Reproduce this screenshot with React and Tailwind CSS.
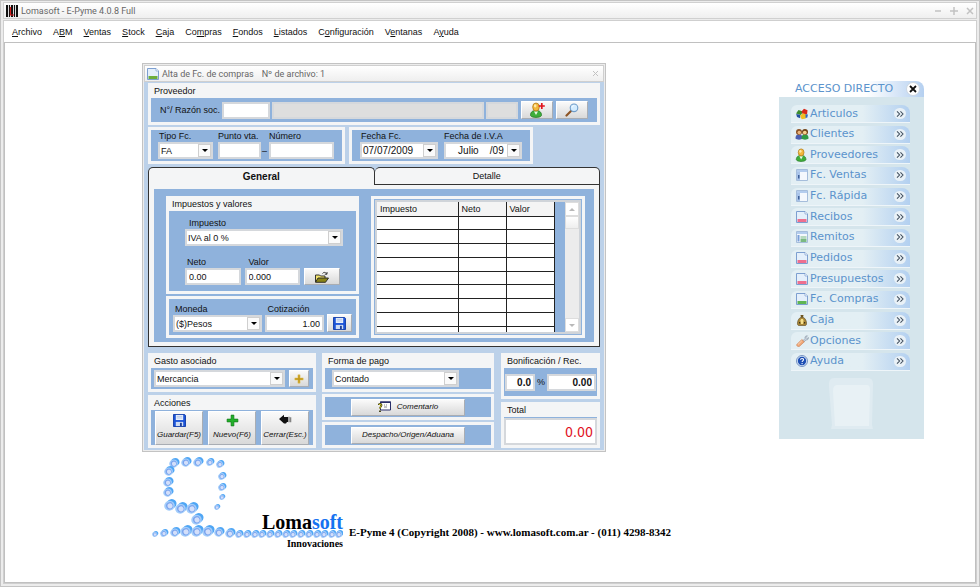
import clsx from 'clsx';

const menu = [
  ['', 'A', 'rchivo'],
  ['A', 'B', 'M'],
  ['', 'V', 'entas'],
  ['', 'S', 'tock'],
  ['', 'C', 'aja'],
  ['Co', 'm', 'pras'],
  ['', 'F', 'ondos'],
  ['', 'L', 'istados'],
  ['C', 'o', 'nfiguración'],
  ['V', 'e', 'ntanas'],
  ['A', 'y', 'uda'],
];

const shortcuts = [
  { label: 'Articulos', icon: 'blocks' },
  { label: 'Clientes', icon: 'people' },
  { label: 'Proveedores', icon: 'person' },
  { label: 'Fc. Ventas', icon: 'form' },
  { label: 'Fc. Rápida', icon: 'form' },
  { label: 'Recibos', icon: 'docRed' },
  { label: 'Remitos', icon: 'formGreen' },
  { label: 'Pedidos', icon: 'docRed' },
  { label: 'Presupuestos', icon: 'docRed' },
  { label: 'Fc. Compras', icon: 'docGreen' },
  { label: 'Caja', icon: 'bag' },
  { label: 'Opciones', icon: 'wrench' },
  { label: 'Ayuda', icon: 'help' },
];

// x, y, radius of every bead in the logo
const beads = [
  [25, 7, 5], [37, 6, 5], [49, 6, 5], [61, 6, 4], [71, 8, 4], [73, 20, 4], [73, 31, 4], [73, 41, 3], [68, 51, 3],
  [20, 15, 5], [19, 26, 5], [19, 36, 5], [21, 49, 6], [32, 52, 6], [43, 52, 6], [48, 63, 6],
  [6, 78, 3], [15, 77, 4], [26, 76, 5], [37, 75, 6], [48, 75, 6], [59, 75, 6], [70, 76, 5], [81, 77, 5],
  [90, 78, 4], [98, 78, 4], [106, 78, 4], [113, 78, 4], [121, 78, 4], [129, 78, 4], [137, 78, 4],
  [144, 78, 4], [152, 78, 4], [160, 78, 4], [168, 78, 4], [175, 78, 4], [183, 78, 4], [190, 78, 4],
];

const DocIcon = ({ color, className }) => (
  <svg viewBox="0 0 12 12" className={className} aria-hidden="true">
    <path d="M.5.5h8.500l2.500 2.500v8.500h-11z" fill="#e4effb" stroke="#7d9fd0" />
    <path d="M9 .5V3h2.500" fill="#fff" stroke="#7d9fd0" strokeWidth=".7" />
    <path d="M1.500 8h9v3h-9z" fill={color} />
  </svg>
);

const FormIcon = ({ green }) => (
  <svg viewBox="0 0 12 12" className="size-3" aria-hidden="true">
    <path d="M.5.5h11v11H.5z" fill="#f4f8fd" stroke="#a5bddb" />
    <path d="M1 1h10v2H1z" fill="#b4cdee" />
    {green ? (
      <>
        <path d="M1.500 4h2v6.500h-2z" fill="#7aa0d8" />
        <path d="M4.500 5.500h6v1h-6zM4.500 7.500h6v3.500h-6z" fill="#79b982" />
      </>
    ) : (
      <>
        <path d="M1 3h3v8H1z" fill="#a9c4ea" />
        <path d="M2 6h1.500v3.500H2z" fill="#3d5f97" />
      </>
    )}
  </svg>
);

const Person = ({ className, plus }) => (
  <svg viewBox="0 0 16 16" className={className} aria-hidden="true">
    <path d="M1.500 13.500c0-4 2.500-5 5.500-5s5.500 1 5.500 5c-1 2.500-10 2.500-11 0z" fill="#3fae3b" stroke="#237a24" strokeWidth=".8" />
    <path d="M5 9.500h4L7 13z" fill="#eafbe6" />
    <ellipse cx="7" cy="5" rx="3.300" ry="4" fill="#f3b83c" stroke="#b37a17" strokeWidth=".8" />
    <ellipse cx="6.200" cy="3.800" rx="1.300" ry="1.600" fill="#fde9a8" />
    {plus && <path d="M12.800 1v6M9.800 4h6" stroke="#e0141e" strokeWidth="1.700" />}
  </svg>
);

const People = () => (
  <svg viewBox="0 0 14 12" className="h-3 w-3.5" aria-hidden="true">
    <path d="M.5 10.500C.5 7 2 6.500 4 6.500s3.500.5 3.500 4c-1 1.500-6 1.500-7 0z" fill="#4a5fb0" />
    <path d="M6.500 10.500c0-3.500 1.500-4 3.500-4s3.500.5 3.500 4c-1 1.500-6 1.500-7 0z" fill="#2f9a45" />
    <circle cx="4" cy="4" r="3" fill="#8c5226" />
    <circle cx="4.300" cy="4.600" r="1.800" fill="#eab67d" />
    <circle cx="10" cy="4" r="3" fill="#6f4216" />
    <circle cx="9.800" cy="4.600" r="1.900" fill="#f5cf8d" />
  </svg>
);

const Blocks = () => (
  <svg viewBox="0 0 14 12" className="h-3 w-3.5" aria-hidden="true">
    <path d="M1 5.500L3.500 2 8 3.500 6 7z" fill="#3c8d2f" />
    <path d="M6.500 3.500L9 .8l3.500 1.500-.5 4-4 .5z" fill="#d8281b" />
    <path d="M1.200 6l4 .8v3.500L2 9z" fill="#23509f" />
    <path d="M5 7.500l3.500-2.200 3 1.500-.8 3.700-4 .8z" fill="#f0bd22" />
    <path d="M10.500 6.300l2.500.2-.7 3-1.700.5z" fill="#2f67c5" />
  </svg>
);

const Bag = () => (
  <svg viewBox="0 0 12 12" className="size-3" aria-hidden="true">
    <path d="M4.500 1h3L7 3.500H5z" fill="#6d5522" />
    <path d="M4.500 3.500h3C10.500 5 11.500 11 9.500 11.500h-7C.5 11 1.500 5 4.500 3.500z" fill="#a88636" stroke="#5a4720" strokeWidth=".6" />
    <path d="M5 5h2l.5 1.500L7 10H5l-.6-3.500z" fill="#f6df8b" />
    <path d="M3 8h1.200v1.500H3zM8 8h1.200v1.500H8z" fill="#3d3216" />
  </svg>
);

const Wrench = () => (
  <svg viewBox="0 0 13 12" className="h-3 w-[13px]" aria-hidden="true">
    <path d="M6.500 6L9 3.500C8.500 1.500 10 .5 11.500.8L10 2.300l1 1.200 1.500-1c.3 1.500-1 2.800-2.500 2.500L8 7z" fill="#c6d0dc" stroke="#7d8a9b" strokeWidth=".5" />
    <path d="M.8 9.500l5-5 2.500 2.300-4.800 4.500C2 12 .3 11 .8 9.500z" fill="#f0a878" stroke="#c9794b" strokeWidth=".6" />
    <path d="M1.800 9.700l4-3.900" stroke="#fbd9bf" strokeWidth=".9" />
  </svg>
);

const Help = () => (
  <svg viewBox="0 0 12 12" className="size-3" aria-hidden="true">
    <circle cx="6" cy="6" r="5.500" fill="#d7e6f8" stroke="#4b6fae" strokeWidth=".7" />
    <circle cx="6" cy="6" r="4.200" fill="#1d4fb4" />
    <path d="M4.500 4.700C4.600 3 7.600 3 7.500 4.800c0 1-1.400 1.100-1.400 2.100" stroke="#fff" fill="none" strokeWidth="1.100" />
    <circle cx="6.100" cy="8.600" r=".7" fill="#fff" />
  </svg>
);

const Floppy = ({ className }) => (
  <svg viewBox="0 0 14 14" className={className} aria-hidden="true">
    <path d="M.5.5h12l1 1v12H.5z" fill="#1c54d8" stroke="#0f3aa6" />
    <path d="M3 1h8v5.500H3z" fill="#e9f0fb" />
    <path d="M4 2.500h6M4 4.300h6" stroke="#9db4dd" strokeWidth=".7" />
    <path d="M3 8.500h8V13H3z" fill="#cfdcf3" />
    <path d="M7.500 9.500h2V13h-2z" fill="#1c3f96" />
  </svg>
);

const Magnifier = () => (
  <svg viewBox="0 0 14 14" className="size-3.5" aria-hidden="true">
    <path d="M1.500 12.500l5-5" stroke="#8d5424" strokeWidth="2.200" strokeLinecap="round" />
    <circle cx="9" cy="4.800" r="3.800" fill="#d3ecff" stroke="#6f9cc8" strokeWidth="1.100" />
    <path d="M7 4.500c.2-1.300 1.200-1.900 2.300-1.800" stroke="#fff" fill="none" />
  </svg>
);

const Folder = () => (
  <svg viewBox="0 0 14 12" className="h-3 w-3.5" aria-hidden="true">
    <path d="M.5 11V4h4l1 1h4.500v2" fill="#f2e36c" stroke="#222" strokeWidth=".9" />
    <path d="M.5 11.300L3 7h10.500L10.500 11.300z" fill="#8a8417" stroke="#222" strokeWidth=".9" />
    <path d="M7.500 2.500c1-1.500 3-1.500 4 .2M12 1v2.200H9.800" stroke="#222" fill="none" strokeWidth=".9" />
  </svg>
);

const Plus = ({ className, color, edge }) => (
  <svg viewBox="0 0 12 12" className={className} aria-hidden="true">
    <path d="M4.700 1h2.600v3.700H11v2.600H7.300V11H4.700V7.300H1V4.700h3.700z" fill={color} stroke={edge} strokeWidth=".6" />
  </svg>
);

const Hand = () => (
  <svg viewBox="0 0 13 11" className="h-[11px] w-[13px]" aria-hidden="true">
    <path d="M0 5L5 .8V3h4v5H8l-1 1.500H5z" fill="#111" />
    <path d="M9.500 2.800h1v5.500h-1zM11.300 3.200h.9v5h-.9z" fill="#555" />
  </svg>
);

const Note = () => (
  <svg viewBox="0 0 13 12" className="h-3 w-[13px]" aria-hidden="true">
    <path d="M2.500 1h10v8h-10z" fill="#fff" stroke="#2a2f6a" />
    <path d="M2 .5h11V2H2z" fill="#2a2f6a" />
    <path d="M6 4h1M8 4h1M6 6h3" stroke="#888" />
    <path d="M.7 4c0-1.500 2.800-1.500 2.800 0S2 5.500 2 7.500M2 9.500v1.500" stroke="#3a3a10" strokeWidth="1.800" fill="none" />
    <path d="M.9 4c0-1 2.400-1 2.400 0S2 5.500 2 7.500" stroke="#f2e32a" strokeWidth=".9" fill="none" />
  </svg>
);

const shortcutIcons = {
  blocks: <Blocks />,
  people: <People />,
  person: <Person className="size-3.5" />,
  form: <FormIcon />,
  formGreen: <FormIcon green />,
  docRed: <DocIcon color="#ee6f8f" className="size-3" />,
  docGreen: <DocIcon color="#5fb653" className="size-3" />,
  bag: <Bag />,
  wrench: <Wrench />,
  help: <Help />,
};

const Group = ({ title, className, bodyClass, children }) => (
  <section className={clsx('flex flex-col bg-[#f4f5f6] p-[3px]', className)}>
    {title && <h2 className="h-3 pl-[3px] leading-[10px]">{title}</h2>}
    <div className={clsx('flex-1 bg-[#8fb2dc]', bodyClass)}>{children}</div>
  </section>
);

const TextBox = ({ label, className, ...props }) => (
  <input
    aria-label={label}
    className={clsx('block h-[17px] min-w-0 border-2 border-[#d5d8dc] px-0.5 leading-3 outline-none', className)}
    {...props}
  />
);

const Combo = ({ id, label, value, className }) => (
  <div className={clsx('relative h-[17px] border-2 border-[#d5d8dc] bg-white', className)}>
    <select id={id} aria-label={label} className="block h-full w-full appearance-none pl-px leading-3 outline-none">
      <option>{value}</option>
    </select>
    <span className="pointer-events-none absolute inset-y-0 right-0 flex w-[13px] items-center justify-center border border-[#cfcfcf] bg-[#fafafa]">
      <svg viewBox="0 0 6 3" className="h-[3px] w-1.5">
        <path d="M0 0h6L3 3z" fill="#000" />
      </svg>
    </span>
  </div>
);

const Button = ({ className, children, ...props }) => (
  <button
    type="button"
    className={clsx(
      'flex shrink-0 items-center justify-center border border-t-white border-r-[#a9adb3] border-b-[#a9adb3] border-l-white bg-linear-to-b from-[#fafafa] to-[#d9d9d9]',
      className,
    )}
    {...props}
  >
    {children}
  </button>
);

const GeneralTab = () => (
  <div className="flex h-[162px] border-x border-b border-[#333] bg-[#f4f5f6] px-[5px] py-1">
    <div className="flex flex-1 gap-3 bg-[#8fb2dc] pt-[7px] pr-[9px] pl-3">
      <div className="flex w-[193px] shrink-0 flex-col gap-0.5">
        <Group title="Impuestos y valores" className="h-[98px]" bodyClass="px-4 pt-1.5">
          <label htmlFor="impuesto" className="block pl-1 leading-3">Impuesto</label>
          <Combo id="impuesto" value="IVA al 0 %" className="w-[158px]" />
          <div className="mt-2.5 flex items-end gap-1">
            <label className="block w-[58px] leading-3">
              <span className="pl-0.5">Neto</span>
              <TextBox defaultValue="0.00" className="w-full bg-white" />
            </label>
            <label className="block w-[58px] leading-3">
              <span className="pl-1">Valor</span>
              <TextBox defaultValue="0.000" className="w-full bg-white" />
            </label>
            <Button aria-label="Abrir" className="h-[17px] w-9"><Folder /></Button>
          </div>
        </Group>
        <Group className="h-[42px]" bodyClass="flex items-end gap-[3px] px-1 pb-[3px]">
          <div className="w-[90px]">
            <label htmlFor="moneda" className="block pl-0.5 leading-3">Moneda</label>
            <Combo id="moneda" value="($)Pesos" className="w-full" />
          </div>
          <label className="block w-[59px] leading-3">
            <span className="pl-0.5">Cotización</span>
            <TextBox defaultValue="1.00" className="w-full bg-white text-right" />
          </label>
          <Button aria-label="Guardar cotización" className="h-[18px] w-[25px]"><Floppy className="size-[13px]" /></Button>
        </Group>
      </div>
      <div className="flex h-[142px] flex-1 bg-[#f4f5f6] p-[3px]">
        <div className="flex flex-1 border border-[#8fb2dc] bg-[#d0d4d9] p-0.5">
          <div className="flex flex-1 justify-between bg-[#8fb2dc]">
            <table className="h-[130px] w-[178px] table-fixed border-collapse bg-white text-left">
              <thead>
                <tr className="h-[14px] bg-[#f4f4f4]">
                  <th className="w-[81px] border-r border-b border-[#222] py-0 pl-[3px] leading-3 font-normal">Impuesto</th>
                  <th className="w-12 border-r border-b border-[#222] py-0 pl-[3px] leading-3 font-normal">Neto</th>
                  <th className="border-r border-b border-[#222] py-0 pl-[3px] leading-3 font-normal">Valor</th>
                </tr>
              </thead>
              <tbody>
                {[...Array(8).keys()].map(row => (
                  <tr key={row}>
                    <td className="border-r border-b border-[#222] p-0" />
                    <td className="border-r border-b border-[#222] p-0" />
                    <td className="border-r border-b border-[#222] p-0" />
                  </tr>
                ))}
                <tr className="h-1.5">
                  <td className="border-r border-[#222] p-0" />
                  <td className="border-r border-[#222] p-0" />
                  <td className="border-r border-[#222] p-0" />
                </tr>
              </tbody>
            </table>
            <div className="flex w-3.5 flex-col bg-[#ececec] text-[#b9b9b9]">
              <span className="flex h-[14px] items-center justify-center border border-[#ddd] bg-white">
                <svg viewBox="0 0 6 3" className="h-[3px] w-1.5"><path d="M0 3h6L3 0z" fill="currentColor" /></svg>
              </span>
              <span className="h-[13px] border border-[#ddd] bg-linear-to-b from-white to-[#eee]" />
              <span className="mt-auto flex h-[14px] items-center justify-center border border-[#ddd] bg-white">
                <svg viewBox="0 0 6 3" className="h-[3px] w-1.5"><path d="M0 0h6L3 3z" fill="currentColor" /></svg>
              </span>
            </div>
          </div>
        </div>
      </div>
    </div>
  </div>
);

const PurchaseWindow = () => (
  <section className="w-[464px] border border-[#c3c3c3] bg-[#ececec] p-px">
    <header className="flex h-[17px] items-center border border-[#cfcfcf] bg-linear-to-b from-white to-[#efefef] pl-0.5 font-['Roboto',sans-serif] text-[9px] text-[#666]">
      <DocIcon color="#6dae3c" className="mr-[3px] size-3" />
      <h1>Alta de Fc. de compras</h1>
      <span className="ml-2">Nº de archivo: 1</span>
      <button type="button" aria-label="Cerrar" className="mr-1 ml-auto">
        <svg viewBox="0 0 7 7" className="size-[7px]"><path d="M1 1l5 5M6 1L1 6" stroke="#c2c2c2" /></svg>
      </button>
    </header>
    <div className="bg-[#bcd1e9] px-1 pt-px pb-0.5">
      <Group title="Proveedor" className="h-[42px]" bodyClass="flex items-center gap-0.5 pl-[9px]">
        <label htmlFor="proveedor" className="w-[60px] shrink-0 whitespace-nowrap">N°/ Razón soc.</label>
        <TextBox id="proveedor" className="w-12 shrink-0 bg-white" />
        <TextBox label="Razón social" readOnly className="w-[212px] shrink-0 bg-[#dedede]" />
        <TextBox label="Código" readOnly className="w-8 shrink-0 bg-[#dedede]" />
        <Button aria-label="Nuevo proveedor" className="ml-px h-[18px] w-8"><Person plus className="size-4" /></Button>
        <Button aria-label="Buscar proveedor" className="ml-px h-[18px] w-8"><Magnifier /></Button>
      </Group>

      <div className="mt-0.5 flex gap-1">
        <Group className="h-[37px] w-[197px]" bodyClass="flex items-end gap-[5px] pb-0.5 pl-[7px]">
          <div className="w-[55px]">
            <label htmlFor="tipo" className="block pl-px leading-3">Tipo Fc.</label>
            <Combo id="tipo" value="FA" className="w-full" />
          </div>
          <label className="block w-[43px] leading-3 whitespace-nowrap">
            Punto vta.
            <TextBox className="w-full bg-white" />
          </label>
          <div className="-mx-1 flex h-[17px] w-1.5 items-center">–</div>
          <label className="block w-[65px] leading-3">
            Número
            <TextBox className="w-full bg-white" />
          </label>
        </Group>
        <Group className="h-[37px] w-[184px]" bodyClass="flex items-end gap-1.5 pb-0.5 pl-2">
          <div className="w-[78px]">
            <label htmlFor="fecha" className="block pl-px leading-3">Fecha Fc.</label>
            <Combo id="fecha" value="07/07/2009" className="w-full text-[10px]" />
          </div>
          <div className="w-[78px]">
            <label htmlFor="fechaIva" className="block leading-3">Fecha de I.V.A</label>
            <Combo id="fechaIva" value={'\u00a0\u00a0\u00a0\u00a0Julio\u00a0\u00a0\u00a0\u00a0/09'} className="w-full text-[10px]" />
          </div>
        </Group>
      </div>

      <div className="mt-[3px] flex h-[18px]" role="tablist">
        <button type="button" role="tab" aria-selected="true" className="flex-1 rounded-t-[5px] border border-b-0 border-[#333] bg-[#f4f5f6] text-[10px] font-bold">
          General
        </button>
        <button type="button" role="tab" aria-selected="false" className="flex-1 rounded-t-[5px] border border-l-0 border-[#333] bg-[#f4f5f6]">
          Detalle
        </button>
      </div>
      <GeneralTab />

      <div className="mt-1.5 flex items-start">
        <div className="flex w-[168px] shrink-0 flex-col gap-[3px]">
          <Group title="Gasto asociado" className="h-[39px]" bodyClass="flex items-center gap-1 pl-[3px]">
            <Combo label="Gasto asociado" value="Mercancia" className="w-[131px]" />
            <Button aria-label="Agregar gasto" className="h-[17px] w-5"><Plus className="size-2.5" color="#c49a1c" edge="#e2c766" /></Button>
          </Group>
          <Group title="Acciones" className="h-[53px]" bodyClass="flex items-center gap-[5px] pl-1 text-[8px] leading-3 italic">
            <Button className="h-[34px] w-12 flex-col gap-0.5"><Floppy className="size-[13px]" />Guardar(F5)</Button>
            <Button className="h-[34px] w-12 flex-col gap-0.5"><Plus className="size-[13px]" color="#22b02a" edge="#107516" />Nuevo(F6)</Button>
            <Button className="h-[34px] w-12 flex-col gap-1"><Hand />Cerrar(Esc.)</Button>
          </Group>
        </div>
        <div className="ml-1.5 flex w-[172px] shrink-0 flex-col gap-0.5">
          <Group title="Forma de pago" className="h-[39px]" bodyClass="flex items-center pl-[7px]">
            <Combo label="Forma de pago" value="Contado" className="w-[127px]" />
          </Group>
          <Group className="h-[26px]" bodyClass="flex items-center pl-[26px] text-[8px] italic">
            <Button className="h-[17px] w-[114px] gap-1.5"><Note />Comentario</Button>
          </Group>
          <Group className="h-[26px]" bodyClass="flex items-center pl-[26px] text-[8px] italic">
            <Button className="h-[17px] w-[114px]">Despacho/Origen/Aduana</Button>
          </Group>
        </div>
        <div className="ml-[7px] flex min-w-0 flex-1 flex-col gap-[3px]">
          <Group title="Bonificación / Rec." className="h-[46px]" bodyClass="flex items-center gap-0.5 px-px">
            <TextBox label="Bonificación %" defaultValue="0.0" className="w-[30px] shrink-0 bg-white text-right text-[10px] font-bold" />
            %
            <TextBox label="Bonificación" defaultValue="0.00" className="w-0 flex-1 bg-white text-right text-[10px] font-bold" />
          </Group>
          <Group title="Total" className="h-[46px]" bodyClass="pt-px">
            <input
              aria-label="Total"
              readOnly
              defaultValue="0.00"
              className="block h-[27px] w-full border-2 border-[#d5d8dc] bg-white px-0.5 text-right font-['DejaVu_Sans_Condensed','DejaVu_Sans',sans-serif] text-[14px] text-[#e0101c] outline-none"
            />
          </Group>
        </div>
      </div>
    </div>
  </section>
);

const Shortcuts = () => (
  <aside className="mt-[18px] w-[145px] font-['DejaVu_Sans',sans-serif] text-[11px] text-[#5b93cc]">
    <header className="flex h-4 items-center justify-between rounded-tr-lg bg-linear-to-r from-white from-60% to-[#b5d0f0] pl-4">
      <h2>ACCESO DIRECTO</h2>
      <button type="button" aria-label="Cerrar acceso directo" className="mr-1 flex size-3.5 items-center justify-center rounded-full border border-[#ccd6e0] bg-white">
        <svg viewBox="0 0 8 8" className="size-2"><path d="M1 1l6 6M7 1L1 7" stroke="#111" strokeWidth="1.800" /></svg>
      </button>
    </header>
    <div className="bg-[#d5e5ec] pt-2 pr-3.5 pb-2 pl-3">
      <nav className="flex h-[266px] flex-col justify-between">
        {shortcuts.map(item => (
          <a key={item.label} href="#" className="flex h-[18px] items-center rounded-tl-md rounded-tr-lg border-b border-[#eef5f9] bg-linear-to-r from-[#e3eff4] from-60% to-[#b3d0f0] pl-[3px]">
            <span className="flex w-4 justify-center">{shortcutIcons[item.icon]}</span>
            <span className="flex-1 leading-4 whitespace-nowrap">{item.label}</span>
            <span className="mr-1 flex h-[11px] w-3 items-center justify-center rounded-full bg-[#e9f1f7]">
              <svg viewBox="0 0 9 7" className="h-[6px] w-2">
                <path d="M1 .5l3 3-3 3M5 .5l3 3-3 3" stroke="#3f4d5c" strokeWidth="1.200" fill="none" />
              </svg>
            </span>
          </a>
        ))}
      </nav>
      <svg viewBox="0 0 46 54" className="mx-auto mt-1.5 h-[54px] w-[46px]" aria-hidden="true">
        <path d="M6 1h34q5 0 5 6l-1 41 1 4H3l1-4L1 10Q0 1 6 1z" fill="#dfebf1" />
        <path d="M9 8h30q3 0 3 5l-1 36H7L5 14q0-6 4-6z" fill="#e8f1f5" />
      </svg>
    </div>
  </aside>
);

const Logo = () => (
  <div className="relative h-[94px] w-[194px] text-right font-['Liberation_Serif',serif] font-bold text-black">
    <svg viewBox="0 0 194 94" className="absolute inset-0 h-[94px] w-[194px]" aria-hidden="true">
      {beads.map(([x, y, r]) => (
        <g key={`${x}-${y}`} transform={`translate(${x} ${y}) rotate(-20)`}>
          <ellipse cx={r * 0.3} cy={-r * 0.1} rx={r * 0.85} ry={r * 0.78} fill="#4fa6f5" />
          <ellipse cx={-r * 0.12} cy={r * 0.08} rx={r * 0.88} ry={r * 0.82} fill="#a3cdfa" />
          <ellipse cx={-r * 0.1} cy={r * 0.1} rx={r * 0.6} ry={r * 0.6} fill="#7ba4ee" />
          <ellipse cx={-r * 0.05} cy={r * 0.15} rx={r * 0.42} ry={r * 0.42} fill="#d3dffa" />
        </g>
      ))}
    </svg>
    <div className="relative pt-[54px] text-[20px] leading-6">Loma<span className="text-[#1673f0]">soft</span></div>
    <div className="relative mt-1 text-[10px] leading-3">Innovaciones</div>
  </div>
);

export default function App() {
  return (
    <div className="flex min-h-screen flex-col border border-[#c4c4c4] bg-[#ececec] px-0.5 pt-px pb-0.5 font-['Liberation_Sans',sans-serif] text-[9px] leading-3 text-[#111]">
      <header className="flex h-[17px] items-center border border-[#d0d0d0] bg-linear-to-b from-white to-[#efefef] px-0.5 font-['Roboto',sans-serif] text-[9px] text-[#666]">
        <svg viewBox="0 0 12 12" className="mr-[3px] size-3" aria-hidden="true">
          <path d="M0 0h12v12H0z" fill="#ddd" />
          <path d="M0 0h2v12H0zM3 0h1v12H3zM5 0h2v12H5zM8 0h1v12H8zM10 0h2v12h-2z" fill="#111" />
          <path d="M4.500 2v8H8" stroke="#d41a1a" strokeWidth="1.200" fill="none" />
        </svg>
        Lomasoft - E-Pyme 4.0.8 Full
        <div className="ml-auto flex gap-2">
          <button type="button" aria-label="Minimizar"><svg viewBox="0 0 8 8" className="size-2"><path d="M1 4h6" stroke="#c2c2c2" strokeWidth="1.500" /></svg></button>
          <button type="button" aria-label="Maximizar"><svg viewBox="0 0 8 8" className="size-2"><path d="M0 4h8M4 0v8" stroke="#c2c2c2" strokeWidth="1.500" /></svg></button>
          <button type="button" aria-label="Salir"><svg viewBox="0 0 8 8" className="size-2"><path d="M1 1l6 6M7 1L1 7" stroke="#c2c2c2" strokeWidth="1.500" /></svg></button>
        </div>
      </header>
      <div className="mt-px flex flex-1 flex-col border border-[#cfcfcf] bg-white">
        <nav className="flex h-[21px] items-center gap-[11px] pl-2">
          {menu.map(([before, key, after]) => (
            <button type="button" key={before + key + after}>
              {before}<u>{key}</u>{after}
            </button>
          ))}
        </nav>
        <main className="flex-1 border border-[#c0c0c0] pt-5 pb-6">
          <div className="flex items-start justify-between pr-[51px] pl-[137px]">
            <PurchaseWindow />
            <Shortcuts />
          </div>
          <footer className="mt-1 flex items-end pl-36">
            <Logo />
            <p className="mb-3 ml-1.5 font-['Liberation_Serif',serif] text-[11px] font-bold text-black">
              E-Pyme 4 (Copyright 2008) - www.lomasoft.com.ar - (011) 4298-8342
            </p>
          </footer>
        </main>
      </div>
    </div>
  );
}
